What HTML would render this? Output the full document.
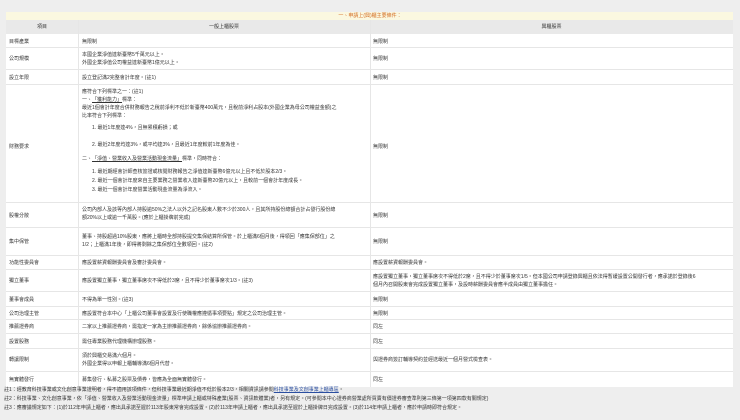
<!DOCTYPE html>
<html><head><meta charset="utf-8"><style>
body{margin:0;width:740px;height:420px;background:#eeeeee;font-family:"Liberation Sans","Noto Sans CJK TC",sans-serif;font-size:5px;color:#333;position:relative;overflow:hidden}
.t{position:absolute;white-space:nowrap;line-height:8px}
.r{position:absolute;left:6px;width:727px;background:#fff;border-bottom:1px solid #e6e6e6}
.v{position:absolute;width:1px;background:#e6e6e6}
u{text-decoration:underline}
</style></head><body>
<div style="position:absolute;left:6px;top:12px;width:727px;height:8px;background:#fbf8e0"></div>
<div class="t" style="left:0;width:740px;text-align:center;top:12px;color:#d2691e">一、申請上(興)櫃主要條件：</div>
<div style="position:absolute;left:6px;top:20px;width:727px;height:14px;background:#e9e9e9"></div>
<div class="t" style="left:6px;width:72px;text-align:center;top:23px">項目</div>
<div class="t" style="left:78px;width:292px;text-align:center;top:23px">一般上櫃股票</div>
<div class="t" style="left:370px;width:363px;text-align:center;top:23px">興櫃股票</div>

<div class="r" style="top:34px;height:13px"></div>
<div class="r" style="top:48px;height:21px"></div>
<div class="r" style="top:70px;height:14px"></div>
<div class="r" style="top:85px;height:117px"></div>
<div class="r" style="top:203px;height:24px"></div>
<div class="r" style="top:228px;height:27px"></div>
<div class="r" style="top:256px;height:13px"></div>
<div class="r" style="top:270px;height:21px"></div>
<div class="r" style="top:292px;height:14px"></div>
<div class="r" style="top:307px;height:12px"></div>
<div class="r" style="top:320px;height:13px"></div>
<div class="r" style="top:334px;height:14px"></div>
<div class="r" style="top:349px;height:22px"></div>
<div class="r" style="top:372px;height:15px;border-bottom:none"></div>
<div class="v" style="left:78px;top:20px;height:367px"></div>
<div class="v" style="left:370px;top:20px;height:367px"></div>

<div class="t" style="left:9px;top:38px">目標產業</div>
<div class="t" style="left:82px;top:38px">無限制</div>
<div class="t" style="left:373px;top:38px">無限制</div>

<div class="t" style="left:9px;top:55px">公司規模</div>
<div class="t" style="left:82px;top:51px">本國企業淨值達新臺幣5千萬元以上。<br>外國企業淨值公司權益達新臺幣1億元以上。</div>
<div class="t" style="left:373px;top:55px">無限制</div>

<div class="t" style="left:9px;top:74px">設立年限</div>
<div class="t" style="left:82px;top:74px">設立登記滿2完整會計年度。(註1)</div>
<div class="t" style="left:373px;top:74px">無限制</div>

<div class="t" style="left:9px;top:143px">財務要求</div>
<div class="t" style="left:82px;top:88px">應符合下列標準之一：(註1)<br>一、<u>「獲利能力」</u>標準：<br>最近1個會計年度合併財務報告之稅前淨利不低於新臺幣400萬元，且稅前淨利占股本(外國企業為母公司權益金額)之<br>比率符合下列標準：</div>
<div class="t" style="left:92px;top:124px">1. 最近1年度達4%，且無累積虧損；或</div>
<div class="t" style="left:92px;top:141px">2. 最近2年度均達3%，或平均達3%，且最近1年度較前1年度為佳。</div>
<div class="t" style="left:82px;top:155px">二、<u>「淨值、營業收入及營業活動現金流量」</u>標準，同時符合：</div>
<div class="t" style="left:92px;top:168px">1. 最近期經會計師查核簽證或核閱財務報告之淨值達新臺幣6億元以上且不低於股本2/3。</div>
<div class="t" style="left:92px;top:177px">2. 最近一個會計年度來自主要業務之營業收入達新臺幣20億元以上，且較前一個會計年度成長。</div>
<div class="t" style="left:92px;top:186px">3. 最近一個會計年度營業活動現金流量為淨流入。</div>
<div class="t" style="left:373px;top:143px">無限制</div>

<div class="t" style="left:9px;top:212px">股權分散</div>
<div class="t" style="left:82px;top:206px">公司內部人及該等內部人持股逾50%之法人以外之記名股東人數不少於300人，且其所持股份總額合計占發行股份總<br>額20%以上或逾一千萬股。(應於上櫃掛牌前完成)</div>
<div class="t" style="left:373px;top:212px">無限制</div>

<div class="t" style="left:9px;top:238px">集中保管</div>
<div class="t" style="left:82px;top:233px">董事、持股超過10%股東，應將上櫃時全部持股提交集保結算所保管。於上櫃滿6個月後，得領回「應集保部位」之<br>1/2；上櫃滿1年後，即得將剩餘之集保部位全數領回。(註2)</div>
<div class="t" style="left:373px;top:238px">無限制</div>

<div class="t" style="left:9px;top:259px">功能性委員會</div>
<div class="t" style="left:82px;top:259px">應設置薪資報酬委員會及審計委員會。</div>
<div class="t" style="left:373px;top:259px">應設置薪資報酬委員會。</div>

<div class="t" style="left:9px;top:277px">獨立董事</div>
<div class="t" style="left:82px;top:277px">應設置獨立董事，獨立董事席次不得低於3席，且不得少於董事席次1/3。(註3)</div>
<div class="t" style="left:373px;top:273px">應設置獨立董事，獨立董事席次不得低於2席，且不得少於董事席次1/5。但本國公司申請登錄興櫃且依法得暫緩設置公開發行者，應承諾於登錄後6<br>個月內召開股東會完成設置獨立董事，及設時薪酬委員會應半成員由獨立董事擔任。</div>

<div class="t" style="left:9px;top:296px">董事會成員</div>
<div class="t" style="left:82px;top:296px">不得為單一性別。(註3)</div>
<div class="t" style="left:373px;top:296px">無限制</div>

<div class="t" style="left:9px;top:310px">公司治理主管</div>
<div class="t" style="left:82px;top:310px">應設置符合本中心「上櫃公司董事會設置及行使職權應遵循事項要點」規定之公司治理主管。</div>
<div class="t" style="left:373px;top:310px">無限制</div>

<div class="t" style="left:9px;top:323px">推薦證券商</div>
<div class="t" style="left:82px;top:323px">二家以上推薦證券商，需指定一家為主辦推薦證券商，餘係協辦推薦證券商。</div>
<div class="t" style="left:373px;top:323px">同左</div>

<div class="t" style="left:9px;top:338px">設置股務</div>
<div class="t" style="left:82px;top:338px">需任專業股務代理機構辦理股務。</div>
<div class="t" style="left:373px;top:338px">同左</div>

<div class="t" style="left:9px;top:356px">轉讓限制</div>
<div class="t" style="left:82px;top:352px">須於興櫃交易滿六個月。<br>外國企業得以申報上櫃輔導滿6個月代替。</div>
<div class="t" style="left:373px;top:356px">與證券商簽訂輔導契約並經送最近一個月營式檢查表。</div>

<div class="t" style="left:9px;top:376px">無實體發行</div>
<div class="t" style="left:82px;top:376px">募集發行、私募之股票及債券，皆應為全面無實體發行。</div>
<div class="t" style="left:373px;top:376px">同左</div>

<div class="t" style="left:4px;top:386px">註1：經教育科技事業或文化創意事業證明者，得不適用該項條件，但科技事業最近期淨值不低於股本2/3，相關資訊請參閱<u style="color:#2a4ea0">科技事業及文創事業上櫃專區</u>。</div>
<div class="t" style="left:4px;top:395px">註2：科技事業、文化創意事業，依「淨值、營業收入及營業活動現金流量」標準申請上櫃或特殊產業(股票、資訊軟體業)者，另有規定。(可參閱本中心證券商營業處所買賣有價證券審查準則第三條第一項第四款有關規定)</div>
<div class="t" style="left:4px;top:404px">註3：應審議規定如下：(1)於112年申請上櫃者，應出具承諾至遲於113年股東常會完成設置。(2)於113年申請上櫃者，應出具承諾至遲於上櫃掛牌日完成設置。(3)於114年申請上櫃者，應於申請時即符合規定。</div>
</body></html>
